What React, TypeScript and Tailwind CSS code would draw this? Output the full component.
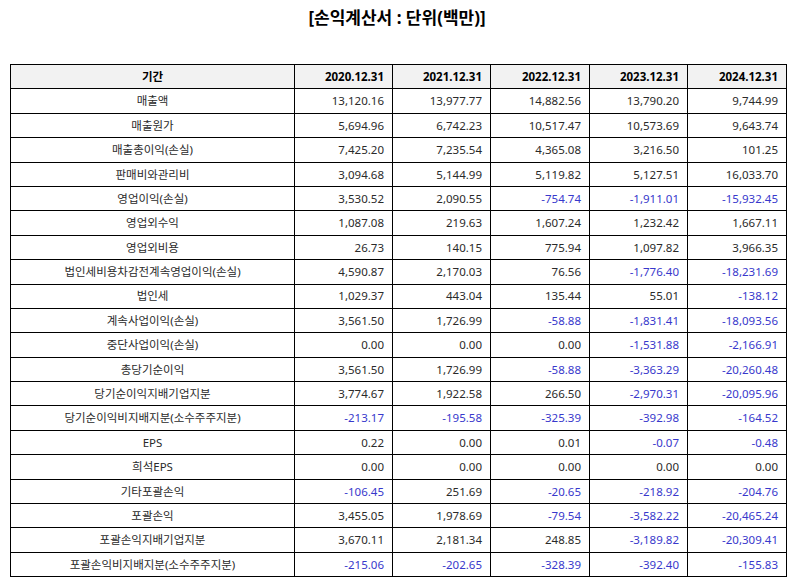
const years = ["2020.12.31", "2021.12.31", "2022.12.31", "2023.12.31", "2024.12.31"];

const rows: [string, string[]][] = [
  ["매출액", ["13,120.16", "13,977.77", "14,882.56", "13,790.20", "9,744.99"]],
  ["매출원가", ["5,694.96", "6,742.23", "10,517.47", "10,573.69", "9,643.74"]],
  ["매출총이익(손실)", ["7,425.20", "7,235.54", "4,365.08", "3,216.50", "101.25"]],
  ["판매비와관리비", ["3,094.68", "5,144.99", "5,119.82", "5,127.51", "16,033.70"]],
  ["영업이익(손실)", ["3,530.52", "2,090.55", "-754.74", "-1,911.01", "-15,932.45"]],
  ["영업외수익", ["1,087.08", "219.63", "1,607.24", "1,232.42", "1,667.11"]],
  ["영업외비용", ["26.73", "140.15", "775.94", "1,097.82", "3,966.35"]],
  ["법인세비용차감전계속영업이익(손실)", ["4,590.87", "2,170.03", "76.56", "-1,776.40", "-18,231.69"]],
  ["법인세", ["1,029.37", "443.04", "135.44", "55.01", "-138.12"]],
  ["계속사업이익(손실)", ["3,561.50", "1,726.99", "-58.88", "-1,831.41", "-18,093.56"]],
  ["중단사업이익(손실)", ["0.00", "0.00", "0.00", "-1,531.88", "-2,166.91"]],
  ["총당기순이익", ["3,561.50", "1,726.99", "-58.88", "-3,363.29", "-20,260.48"]],
  ["당기순이익지배기업지분", ["3,774.67", "1,922.58", "266.50", "-2,970.31", "-20,095.96"]],
  ["당기순이익비지배지분(소수주주지분)", ["-213.17", "-195.58", "-325.39", "-392.98", "-164.52"]],
  ["EPS", ["0.22", "0.00", "0.01", "-0.07", "-0.48"]],
  ["희석EPS", ["0.00", "0.00", "0.00", "0.00", "0.00"]],
  ["기타포괄손익", ["-106.45", "251.69", "-20.65", "-218.92", "-204.76"]],
  ["포괄손익", ["3,455.05", "1,978.69", "-79.54", "-3,582.22", "-20,465.24"]],
  ["포괄손익지배기업지분", ["3,670.11", "2,181.34", "248.85", "-3,189.82", "-20,309.41"]],
  ["포괄손익비지배지분(소수주주지분)", ["-215.06", "-202.65", "-328.39", "-392.40", "-155.83"]],
];

export default function App() {
  return (
    <div className="w-[794px] h-[586px] bg-white px-[10px] font-['Noto_Sans','Noto_Sans_CJK_KR',sans-serif] text-[#2a2a2a]">
      <h1 className="pt-[7px] h-[64px] text-center text-[17px] leading-[22px] font-bold text-black">
        [손익계산서 : 단위(백만)]
      </h1>

      <table className="w-[776px] table-fixed border-collapse">
        <colgroup>
          <col className="w-[284px]" />
          <col className="w-[98px]" />
          <col className="w-[98px]" />
          <col className="w-[99px]" />
          <col className="w-[98px]" />
          <col className="w-[99px]" />
        </colgroup>
        <thead>
          <tr className="h-[24.4px] bg-[#f2f2f2]">
            <th className="border border-black text-center text-[11.5px] font-bold text-black p-0 leading-none">기간</th>
            {years.map((y) => (
              <th key={y} className="border border-black text-right text-[11.5px] font-bold text-black pr-[8px] p-0 leading-none">
                {y}
              </th>
            ))}
          </tr>
        </thead>
        <tbody>
          {rows.map(([label, vals]) => (
            <tr key={label} className="h-[24.4px]">
              <td className="border border-black text-center text-[11.5px] p-0 leading-none">{label}</td>
              {vals.map((v, i) => (
                <td
                  key={i}
                  className={
                    v.startsWith("-")
                      ? "border border-black text-right text-[11.5px] pr-[8px] p-0 leading-none text-[#3838cc]"
                      : "border border-black text-right text-[11.5px] pr-[8px] p-0 leading-none"
                  }
                >
                  {v}
                </td>
              ))}
            </tr>
          ))}
        </tbody>
      </table>
    </div>
  );
}
